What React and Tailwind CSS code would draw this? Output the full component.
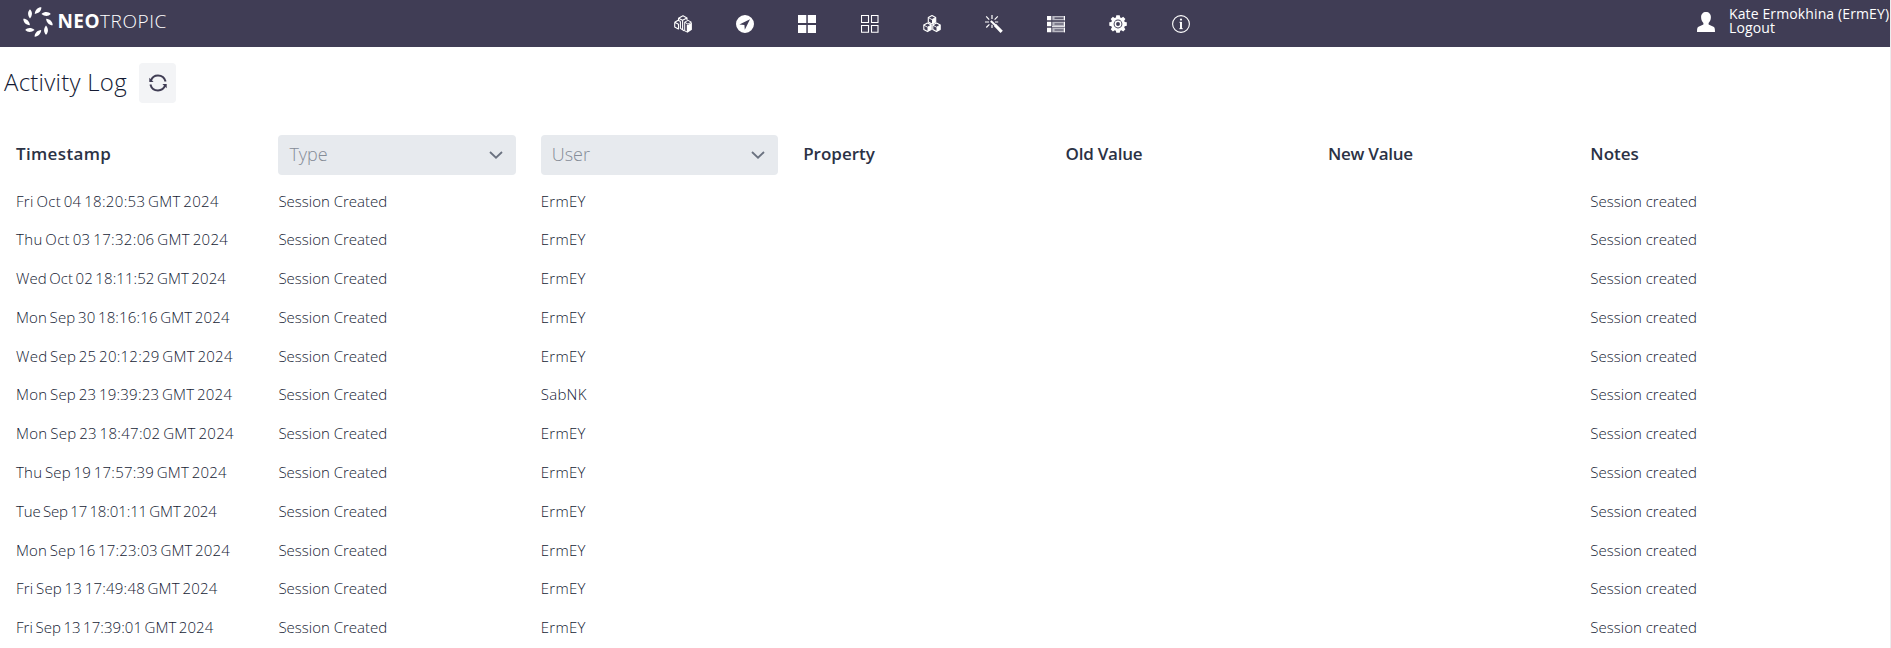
import React from "react";

const rows = [
  ["Fri Oct 04 18:20:53 GMT 2024", "ErmEY", "tracking-[0.32px]"],
  ["Thu Oct 03 17:32:06 GMT 2024", "ErmEY", "tracking-[0.34px]"],
  ["Wed Oct 02 18:11:52 GMT 2024", "ErmEY", "tracking-[0.08px]"],
  ["Mon Sep 30 18:16:16 GMT 2024", "ErmEY", "tracking-[0.15px]"],
  ["Wed Sep 25 20:12:29 GMT 2024", "ErmEY", "tracking-[0.26px]"],
  ["Mon Sep 23 19:39:23 GMT 2024", "SabNK", "tracking-[0.24px]"],
  ["Mon Sep 23 18:47:02 GMT 2024", "ErmEY", "tracking-[0.3px]"],
  ["Thu Sep 19 17:57:39 GMT 2024", "ErmEY", "tracking-[0.23px]"],
  ["Tue Sep 17 18:01:11 GMT 2024", "ErmEY", "tracking-[-0.11px]"],
  ["Mon Sep 16 17:23:03 GMT 2024", "ErmEY", "tracking-[0.16px]"],
  ["Fri Sep 13 17:49:48 GMT 2024", "ErmEY", "tracking-[0.21px]"],
  ["Fri Sep 13 17:39:01 GMT 2024", "ErmEY", "tracking-[0.06px]"],
];

function Icon({ children }) {
  return (
    <svg viewBox="0 0 18 18" className="h-[18px] w-[18px] text-white" fill="none" stroke="currentColor">
      {children}
    </svg>
  );
}

const cube = "M0 -4.3L3.7 -2.3V2.1L0 4.2L-3.7 2.1V-2.3Z";

function Cube({ x, y }) {
  return (
    <g transform={`translate(${x} ${y})`}>
      <path d={cube} strokeWidth="1.1" strokeLinejoin="round" />
      <path d="M0 0L3.7 -2.3V2.1L0 4.2Z" fill="currentColor" stroke="none" />
      <path d="M-3.7 -2.3L0 -.2L3.7 -2.3" strokeWidth=".9" />
    </g>
  );
}

const icons = [
  <Icon key="buildings">
    <path d="M.7 7.2L4.2 5.2L6.5 6.4M.7 7.2V12L4.8 14.2M.7 7.2L4.5 9.2V14M4.5 3.2L9 .8L13 2.9L8.6 5.2ZM4.5 3.2V5.2M8.6 5.2V14.6M6.4 6.4V13.4L10.5 16M13 2.9V5" strokeWidth="1.1" strokeLinejoin="round" />
    <path d="M10.7 7.2L14 5.4L17.4 7.2L13.9 9.1Z" strokeWidth="1" strokeLinejoin="round" />
    <path d="M12.8 9.4L14 10L17.9 7.6V14.8L13.8 17.6L12.8 17Z" fill="currentColor" stroke="none" />
    <path d="M10.7 7.2V15.8L13.5 17.2" strokeWidth="1" />
  </Icon>,
  <Icon key="compass">
    <path fillRule="evenodd" d="M9 0A9 9 0 1 1 9 18A9 9 0 1 1 9 0ZM14 4.3L3.4 9.6L8.4 10L8.8 14.8Z" fill="currentColor" stroke="none" />
  </Icon>,
  <Icon key="tiles">
    <path d="M0 0H8.3V8H0ZM9.8 0H18V8H9.8ZM0 10H8.3V18H0ZM9.8 10H18V18H9.8Z" fill="currentColor" stroke="none" />
  </Icon>,
  <Icon key="grid">
    <path d="M.5 .5H7.5V7.5H.5ZM10.5 .5H17V7.5H10.5ZM.5 10.5H7.5V17.3H.5ZM10.5 10.5H17V17.3H10.5Z" strokeWidth="1.1" />
  </Icon>,
  <Icon key="cubes">
    <Cube x={9} y={4.8} />
    <Cube x={4.5} y={12.4} />
    <Cube x={13.5} y={12.4} />
  </Icon>,
  <Icon key="wand">
    <path d="M7 0V4M1.2 1.4L4.2 4.6M12.8 1.4L9.6 4.6M0 7H4M10 7H13.2M1.3 12.5L4.4 9.4M7 9.8V13" strokeWidth="1.2" />
    <path d="M5.8 6.1L11.5 11.3" strokeWidth="2" />
    <path d="M10 10L16.7 16.8" strokeWidth="3.2" />
  </Icon>,
  <Icon key="list">
    <path d="M0 1H4.3V5.3H0ZM0 6.8H4.3V11.2H0ZM0 12.7H4.3V17.3H0Z" fill="currentColor" stroke="none" />
    <path d="M5.3 1H18V5.3H5.3ZM5.3 6.8H18V11.2H5.3ZM5.3 12.7H18V17.3H5.3Z" fill="#b9b8c2" stroke="none" />
    <path d="M7.5 3.2H16.5M7.5 9H16.5M7.5 15H16.5" stroke="#403d55" strokeWidth="1.2" />
    <path d="M5 11.7H18M17.5 1V5.3M17.5 6.8V11.2M17.5 12.7V17.3" strokeWidth="1" />
  </Icon>,
  <Icon key="gear">
    <path
      fillRule="evenodd"
      d="M7.3 .3H10.7L11.2 2.4L12.4 2.9L14.2 1.7L16.4 3.9L15.2 5.7L15.7 6.9L17.8 7.3V10.7L15.7 11.2L15.2 12.4L16.4 14.2L14.2 16.4L12.4 15.2L11.2 15.7L10.7 17.8H7.3L6.9 15.7L5.7 15.2L3.9 16.4L1.7 14.2L2.9 12.4L2.4 11.2L.3 10.7V7.3L2.4 6.9L2.9 5.7L1.7 3.9L3.9 1.7L5.7 2.9L6.9 2.4ZM9 4.6A4.4 4.4 0 1 0 9 13.4A4.4 4.4 0 1 0 9 4.6Z"
      fill="currentColor"
      stroke="none"
    />
    <circle cx="9" cy="9" r="2.7" strokeWidth="1.5" />
  </Icon>,
  <Icon key="info">
    <circle cx="9" cy="9" r="8.4" strokeWidth="1.1" />
    <path d="M9 7V14" strokeWidth="1.9" />
    <path d="M7.4 7.3H9.5M7.2 13.7H10.9" strokeWidth=".8" />
    <circle cx="9" cy="4.6" r="1.1" fill="currentColor" stroke="none" />
  </Icon>,
];

function Logo() {
  return (
    <div className="flex w-[552.5px] items-center pb-[3px] pl-[22.5px]">
      <svg viewBox="-15.5 -15.5 31 31" className="h-[30px] w-[30px] shrink-0" fill="#fff">
        {[0, 45, 90, 135, 180, 225, 270, 315].map((a) => (
          <path key={a} transform={`rotate(${a}) translate(0 -11.7) rotate(45)`} d="M0 -4.9C2.5 -2.6 2.8 1.4 0 4.7C-2.8 1.4 -2.5 -2.6 0 -4.9Z" />
        ))}
      </svg>
      <div className="ml-[5px] flex whitespace-nowrap pb-px font-['Open_Sans',sans-serif] text-[19px] leading-none text-white">
        <span className="font-bold tracking-[0.4px]">NEO</span>
        <span className="font-light tracking-[0.6px]">TROPIC</span>
      </div>
    </div>
  );
}

function Filter({ label }) {
  return (
    <button className="flex h-10 w-[237.5px] items-center justify-between rounded bg-[#e7eaee] pl-[11px] pr-[13px] text-[18px] font-light text-[#858c97]">
      <span className="pb-px">{label}</span>
      <svg viewBox="0 0 14 8" className="h-2 w-[14px]" fill="none" stroke="#6b7280" strokeWidth="1.8">
        <path d="M1 1L7 6.7L13 1" />
      </svg>
    </button>
  );
}

export default function App() {
  return (
    <div className="h-[648px] overflow-hidden border-r border-[#ececee] bg-white font-['Open_Sans','Noto_Sans',sans-serif] text-[#141a33]">
      <header className="-mr-px flex h-[47px] justify-between bg-[#403d55]">
        <Logo />
        <nav className="flex items-center">
          {icons.map((icon, i) => (
            <span key={i} className="flex h-[47px] w-[62.2px] items-center justify-center">
              {icon}
            </span>
          ))}
        </nav>
        <div className="flex w-[580px] justify-end">
          <svg viewBox="0 0 18 20" className="mr-[14px] mt-3 h-5 w-[18px]" fill="#fff">
            <path d="M9 0C12 0 13.9 2 13.9 5.2C13.9 8 12.7 10 11.6 11V12.5L16.5 14.7C17.6 15.3 18 16.5 18 20H0C0 16.5 .4 15.3 1.5 14.7L6.4 12.5V11C5.3 10 4.1 8 4.1 5.2C4.1 2 6 0 9 0Z" />
          </svg>
          <div className="flex w-[162px] flex-col whitespace-nowrap pt-[7px] text-[14px] leading-[14px] tracking-[0.12px] text-white">
            <span>Kate Ermokhina (ErmEY)</span>
            <span>Logout</span>
          </div>
        </div>
      </header>

      <div className="flex h-[72px] items-center pl-1">
        <h1 className="w-[135px] whitespace-nowrap pb-[2px] text-[24px] font-light tracking-[0.25px]">Activity Log</h1>
        <button className="flex h-10 w-[37px] items-center justify-center rounded bg-[#f3f4f6]">
          <svg viewBox="0 0 18 18" className="h-[18px] w-[18px]" fill="none" stroke="#403d54" strokeWidth="2">
            <path d="M1.9 6.6C3 3.6 5.7 1.6 9 1.6C12.6 1.6 15.6 4 16.6 7.6" />
            <path d="M1.4 10.4C2.4 14 5.4 16.4 9 16.4C12.3 16.4 15 14.4 16.1 11.4" />
            <path d="M.3 3.8V8H4.6ZM17.7 14.2V10H13.4Z" fill="#403d54" stroke="none" />
          </svg>
        </button>
      </div>

      <main className="pl-4 pt-4">
        <div className="grid h-10 grid-cols-[repeat(7,262.4px)] items-center whitespace-nowrap text-[17px] font-semibold text-[#2b3245]">
          <span className="pb-[2px] tracking-[0.35px]">Timestamp</span>
          <Filter label="Type" />
          <Filter label="User" />
          <span className="pb-[2px]">Property</span>
          <span className="pb-[2px] tracking-[-0.25px]">Old Value</span>
          <span className="pb-[2px] tracking-[-0.25px]">New Value</span>
          <span className="pb-[2px]">Notes</span>
        </div>
        <div className="pt-[6.5px]">
          {rows.map(([time, user, tracking]) => (
            <div key={time} className="grid h-[38.77px] grid-cols-[repeat(7,262.4px)] items-center whitespace-nowrap text-[15px] font-light">
              <span className="[word-spacing:-1.5px]"><span className={tracking}>{time}</span></span>
              <span>Session Created</span>
              <span className="tracking-[0.25px]">{user}</span>
              <span />
              <span />
              <span />
              <span>Session created</span>
            </div>
          ))}
        </div>
      </main>
    </div>
  );
}
